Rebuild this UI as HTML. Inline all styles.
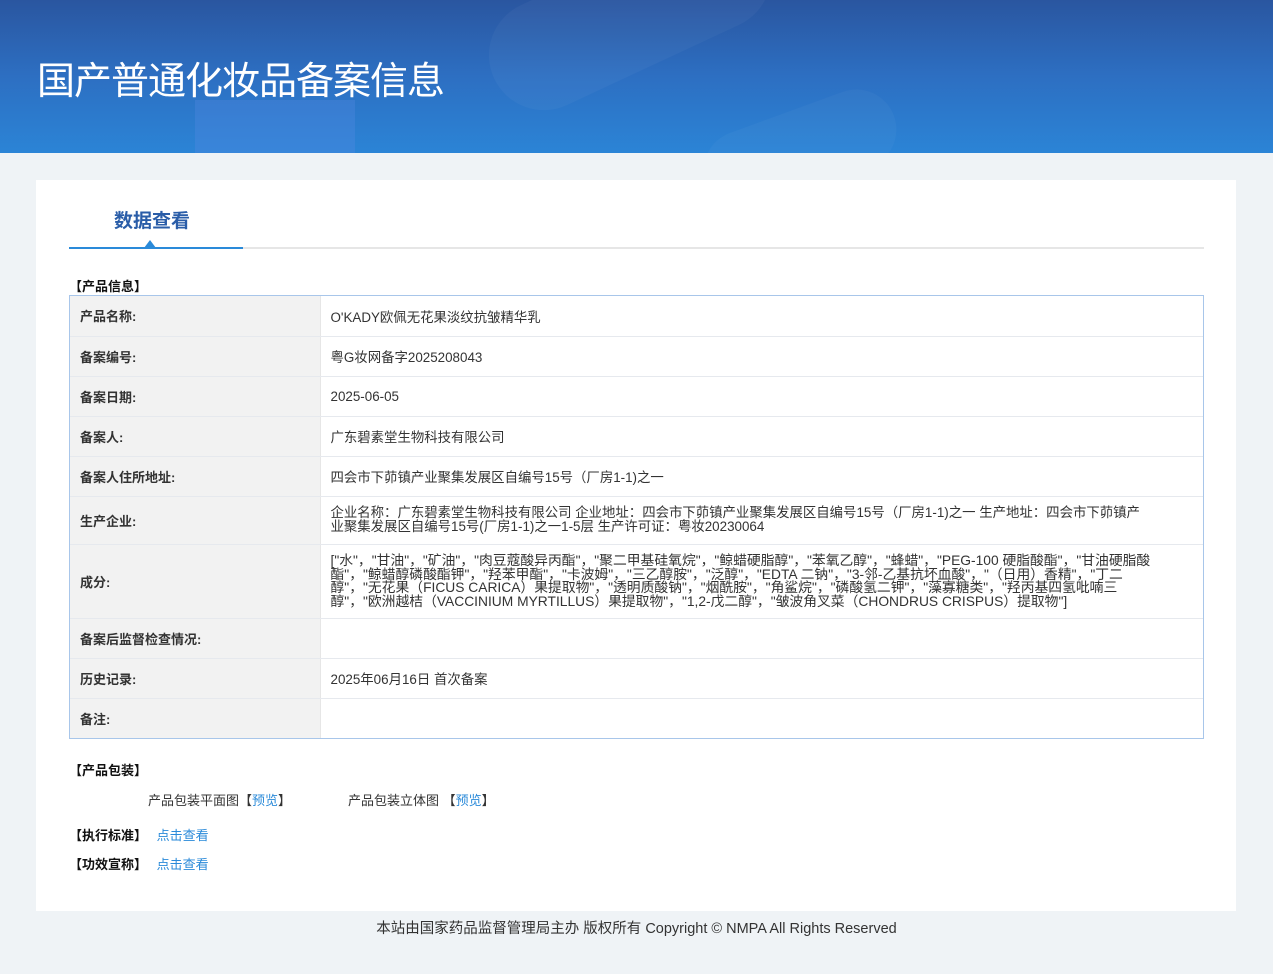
<!DOCTYPE html>
<html><head><meta charset="utf-8">
<style>
*{margin:0;padding:0;box-sizing:border-box}
body{width:1273px;height:974px;background:#eff3f6;font-family:"Liberation Sans","Noto Sans CJK SC",sans-serif;font-size:13px;color:#333;position:relative;overflow:hidden}
.hdr{position:absolute;left:0;top:0;width:1273px;height:153px;background:linear-gradient(180deg,#2a56a0 0%,#2d6fc2 50%,#2b84d6 100%);overflow:hidden}
.hdr .s1{position:absolute;left:195px;top:100px;width:160px;height:80px;background:rgba(90,140,230,.3)}
.hdr .s2{position:absolute;left:480px;top:-40px;width:300px;height:110px;border-radius:60px;background:rgba(255,255,255,.035);transform:rotate(-25deg)}
.hdr .s3{position:absolute;left:700px;top:110px;width:200px;height:80px;border-radius:40px;background:rgba(255,255,255,.03);transform:rotate(-20deg)}
.hdr h1{position:absolute;left:37px;top:50px;font-size:38px;font-weight:normal;color:#fff;letter-spacing:-1px}
.card{position:absolute;left:36px;top:180px;width:1200px;height:731px;background:#fff}
.tab{position:absolute;left:78px;top:26px;font-size:19px;font-weight:bold;color:#2a5da8}
.tline{position:absolute;left:33px;top:67px;width:1135px;height:2px;background:#e6e6e6}
.tline b{position:absolute;left:0;top:0;width:174px;height:2px;background:#2a8ad9}
.tri{position:absolute;left:108px;top:60px;width:0;height:0;border-left:6px solid transparent;border-right:6px solid transparent;border-bottom:8px solid #2a8ad9}
.sec{position:absolute;left:33px;font-weight:bold;color:#111;font-size:13px}
.tbl{position:absolute;left:33px;top:115px;width:1135px;border:1px solid #a8c6ea}
table{width:100%;border-collapse:collapse}
td{border-bottom:1px solid #e6e9ee;font-size:13.4px;color:#333;padding:0 10px;vertical-align:middle}
tr:last-child td{border-bottom:none}
td.l{width:250px;background:#f2f2f2;font-weight:bold;color:#333;border-right:1px solid #e6e6e6;font-size:13px}
.ing{line-height:13.5px;padding-top:5px;padding-bottom:5px;font-size:13.8px}
.blue{color:#2a8ad9}
.foot{position:absolute;top:917px;width:100%;text-align:center;font-size:14.5px;color:#333}
</style></head><body>
<div class="hdr"><div class="s1"></div><div class="s2"></div><div class="s3"></div><h1>国产普通化妆品备案信息</h1></div>
<div class="card">
<div class="tab">数据查看</div>
<div class="tline"><b></b></div>
<div class="tri"></div>
<div class="sec" style="top:96px">【产品信息】</div>
<div class="tbl"><table>
<tr style="height:40px"><td class="l">产品名称:</td><td>O'KADY欧佩无花果淡纹抗皱精华乳</td></tr>
<tr style="height:40px"><td class="l">备案编号:</td><td>粤G妆网备字2025208043</td></tr>
<tr style="height:40px"><td class="l">备案日期:</td><td>2025-06-05</td></tr>
<tr style="height:40px"><td class="l">备案人:</td><td>广东碧素堂生物科技有限公司</td></tr>
<tr style="height:40px"><td class="l">备案人住所地址:</td><td>四会市下茆镇产业聚集发展区自编号15号（厂房1-1)之一</td></tr>
<tr style="height:48px"><td class="l">生产企业:</td><td style="line-height:14px">企业名称：广东碧素堂生物科技有限公司 企业地址：四会市下茆镇产业聚集发展区自编号15号（厂房1-1)之一 生产地址：四会市下茆镇产<br>业聚集发展区自编号15号(厂房1-1)之一1-5层 生产许可证：粤妆20230064</td></tr>
<tr style="height:74px"><td class="l">成分:</td><td class="ing">["水"，"甘油"，"矿油"，"肉豆蔻酸异丙酯"，"聚二甲基硅氧烷"，"鲸蜡硬脂醇"，"苯氧乙醇"，"蜂蜡"，"PEG-100 硬脂酸酯"，"甘油硬脂酸<br>酯"，"鲸蜡醇磷酸酯钾"，"羟苯甲酯"，"卡波姆"，"三乙醇胺"，"泛醇"，"EDTA 二钠"，"3-邻-乙基抗坏血酸"，"（日用）香精"，"丁二<br>醇"，"无花果（FICUS CARICA）果提取物"，"透明质酸钠"，"烟酰胺"，"角鲨烷"，"磷酸氢二钾"，"藻寡糖类"，"羟丙基四氢吡喃三<br>醇"，"欧洲越桔（VACCINIUM MYRTILLUS）果提取物"，"1,2-戊二醇"，"皱波角叉菜（CHONDRUS CRISPUS）提取物"]</td></tr>
<tr style="height:40px"><td class="l">备案后监督检查情况:</td><td></td></tr>
<tr style="height:40px"><td class="l">历史记录:</td><td>2025年06月16日 首次备案</td></tr>
<tr style="height:40px"><td class="l">备注:</td><td></td></tr>
</table></div>
<div class="sec" style="top:580px">【产品包装】</div>
<div style="position:absolute;left:112px;top:610px">产品包装平面图【<span class="blue">预览</span>】</div>
<div style="position:absolute;left:312px;top:610px">产品包装立体图 【<span class="blue">预览</span>】</div>
<div class="sec" style="top:645px">【执行标准】 <span class="blue" style="font-weight:normal;margin-left:6px">点击查看</span></div>
<div class="sec" style="top:674px">【功效宣称】 <span class="blue" style="font-weight:normal;margin-left:6px">点击查看</span></div>
</div>
<div class="foot">本站由国家药品监督管理局主办 版权所有 Copyright © NMPA All Rights Reserved</div>
</body></html>
